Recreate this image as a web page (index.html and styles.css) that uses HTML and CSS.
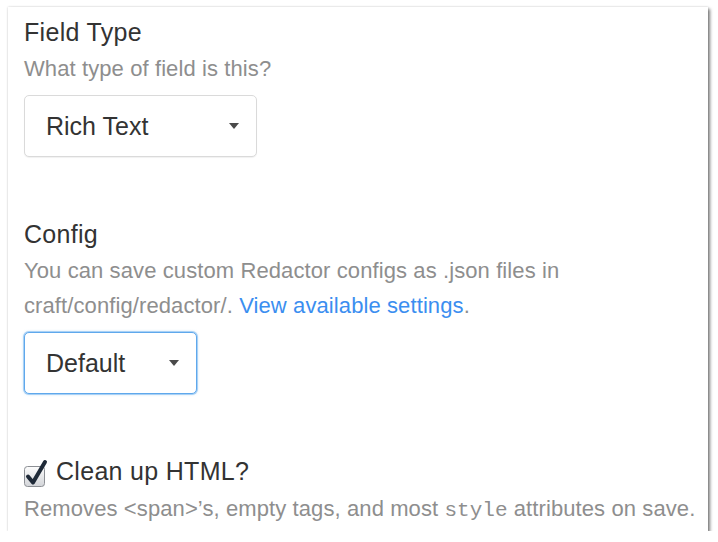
FILE: index.html
```html
<!DOCTYPE html>
<html>
<head>
<meta charset="utf-8">
<link rel="stylesheet" href="styles.css">
</head>
<body>
<div class="panel">
  <div class="field">
    <div class="heading">Field Type</div>
    <div class="instructions">What type of field is this?</div>
    <div class="select select-type">
      <span class="select-value">Rich Text</span>
      <span class="caret"></span>
    </div>
  </div>
  <div class="field">
    <div class="heading">Config</div>
    <div class="instructions">You can save custom Redactor configs as .json files in craft/config/redactor/. <a class="link" href="#">View available settings</a>.</div>
    <div class="select select-config focused">
      <span class="select-value">Default</span>
      <span class="caret"></span>
    </div>
  </div>
  <div class="field last">
    <div class="heading checkbox-row">
      <svg class="checkbox" width="26" height="30" viewBox="0 0 26 30">
        <defs>
          <linearGradient id="cbg" x1="0" y1="0" x2="0" y2="1">
            <stop offset="0" stop-color="#fdfdfd"/>
            <stop offset="1" stop-color="#d2d4d8"/>
          </linearGradient>
        </defs>
        <rect x="1.5" y="8.5" width="20" height="20" rx="3" fill="url(#cbg)" stroke="#8c8f94"/>
        <path d="M5 18.5 L10 24.5 L22 4" fill="none" stroke="#1f2a38" stroke-width="4" stroke-linecap="round" stroke-linejoin="round"/>
      </svg>
      <span>Clean up HTML?</span>
    </div>
    <div class="instructions">Removes &lt;span&gt;’s, empty tags, and most <code class="code">style</code> attributes on save.</div>
  </div>
</div>
</body>
</html>
```
FILE: styles.css
```css
html, body {
  margin: 0;
  padding: 0;
  background: #ffffff;
}

body {
  font-family: "Liberation Sans", Arial, Helvetica, sans-serif;
  color: #333333;
}

.panel {
  margin: 7px 0 0 8px;
  width: 700px;
  height: 524px;
  box-sizing: border-box;
  padding: 10px 0 0 16px;
  background: #ffffff;
  box-shadow: 2px 2px 3px rgba(0, 0, 0, 0.5), 0 0 2px rgba(0, 0, 0, 0.18);
  overflow: hidden;
}

.field {
  margin-bottom: 62px;
}

.field.last {
  margin-bottom: 0;
}

.heading {
  font-size: 25px;
  line-height: 30px;
  letter-spacing: 0.3px;
  color: #333333;
  margin-bottom: 4px;
}

.field.last .heading {
  margin-bottom: 5px;
}

.instructions {
  font-size: 22px;
  line-height: 35px;
  letter-spacing: 0.1px;
  color: #8e8e8e;
  margin-bottom: 9px;
}

.link {
  color: #3b8ef0;
  text-decoration: none;
}

.code {
  font-family: "Liberation Mono", "Courier New", monospace;
  font-size: 21px;
  letter-spacing: 0;
  color: #8e8e8e;
}

.select {
  height: 62px;
  box-sizing: border-box;
  border: 1px solid #dadada;
  border-radius: 5px;
  box-shadow: 0 1px 1px rgba(0, 0, 0, 0.06);
  background: #ffffff;
  display: flex;
  align-items: center;
  justify-content: space-between;
  padding: 0 17px 0 21px;
  font-size: 25px;
  color: #333333;
}

.select-type {
  width: 233px;
}

.select-config {
  width: 173px;
}

.select.focused {
  border: 1px solid #5fa8ec;
  box-shadow: 0 0 0 1px #a9d1f5, 0 0 3px rgba(80, 160, 230, 0.55);
}

.caret {
  width: 0;
  height: 0;
  border-left: 5.5px solid transparent;
  border-right: 5.5px solid transparent;
  border-top: 6px solid #4a4a4a;
}

.checkbox-row {
  display: flex;
  align-items: flex-end;
  gap: 7px;
  margin-left: -1px;
}

.checkbox {
  display: block;
  margin-bottom: -2px;
}
```
